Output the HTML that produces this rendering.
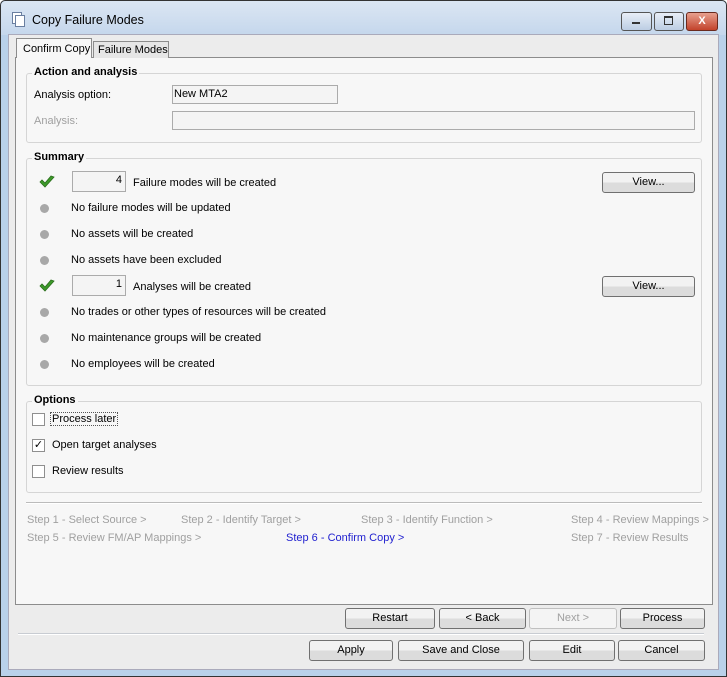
<!DOCTYPE html>
<html><head><style>
body{margin:0;width:727px;height:677px;overflow:hidden;font-family:"Liberation Sans",sans-serif;font-size:11px;color:#000;white-space:nowrap;}
.win{position:absolute;left:0;top:0;width:725px;height:675px;border:1px solid #333;background:#b9d1ea;border-radius:5px 5px 0 0;}
.title{position:absolute;left:0;top:0;width:725px;height:34px;background:linear-gradient(#dbe6f3,#c5d7ec);border-radius:5px 5px 0 0;}
.client{position:absolute;left:7px;top:33px;width:709px;height:634px;background:#ececec;border:1px solid #aab;}
.a{position:absolute;}
.tabpanel{position:absolute;left:6px;top:22px;width:696px;height:546px;border:1px solid #8c8c8c;background:#f7f7f7;}
.grp{position:absolute;border:1px solid #d5d5d5;border-radius:3px;}
.grp .lg{position:absolute;top:-8px;left:5px;background:#f7f7f7;padding:0 2px;font-weight:bold;}
.tb{position:absolute;border:1px solid #ababab;background:#f4f4f4;height:19px;box-sizing:border-box;}
.btn{position:absolute;height:21px;box-sizing:border-box;border:1px solid #707070;border-radius:3px;background:linear-gradient(#f2f2f2 50%,#dcdcdc 50%);text-align:center;line-height:19px;}
.dot{position:absolute;width:9px;height:9px;border-radius:50%;background:#a8a8a8;}
.cb{position:absolute;width:11px;height:11px;border:1px solid #8f8f8f;background:#fff;}
.step{position:absolute;color:#a0a0a0;}
</style></head><body>
<div class="win">
<div class="title"></div>
<svg class="a" style="left:11px;top:11px" width="14" height="16"><rect x="0.5" y="0.5" width="9" height="11" fill="#fff" stroke="#6a7fa0"/><rect x="3.5" y="3.5" width="9" height="11" fill="#fff" stroke="#6a7fa0"/></svg>
<div class="a" style="left:31px;top:12px;font-size:12.5px">Copy Failure Modes</div>
<div class="a" style="left:620px;top:11px;width:29px;height:17px;border:1px solid #555;border-radius:3px;background:linear-gradient(#e8eef7,#bccde3)"></div>
<div class="a" style="left:631px;top:21px;width:8px;height:2px;background:#333"></div>
<div class="a" style="left:653px;top:11px;width:28px;height:17px;border:1px solid #555;border-radius:3px;background:linear-gradient(#e8eef7,#bccde3)"></div>
<div class="a" style="left:663px;top:15px;width:7px;height:6px;border:1px solid #333;border-top-width:2px"></div>
<div class="a" style="left:685px;top:11px;width:30px;height:17px;border:1px solid #6a2a1e;border-radius:3px;background:linear-gradient(#e7a08f,#c3432b);color:#fff;font-weight:bold;text-align:center;line-height:17px">X</div>
<div class="client">
<div class="tabpanel">
<div class="grp" style="left:10px;top:15px;width:674px;height:68px"><span class="lg">Action and analysis</span>
<div class="a" style="left:7px;top:15px">Analysis option:</div>
<div class="tb" style="left:145px;top:11px;width:166px;padding:2px 1px">New MTA2</div>
<div class="a" style="left:7px;top:41px;color:#a0a0a0">Analysis:</div>
<div class="tb" style="left:145px;top:37px;width:523px"></div>
</div>
<div class="grp" style="left:10px;top:100px;width:674px;height:226px"><span class="lg">Summary</span>
<svg class="a" style="left:12px;top:16px" width="16" height="14"><path d="M1 7 L6 12 L15 2 L12 1 L6 8 L3 5 Z" fill="#3d9a2a" stroke="#2a6e1c" stroke-width="0.8"/></svg>
<div class="tb" style="left:45px;top:12px;width:54px;height:21px;text-align:right;padding:2px 3px">4</div>
<div class="a" style="left:106px;top:18px">Failure modes will be created</div>
<div class="btn" style="left:575px;top:13px;width:93px">View...</div>
<div class="dot" style="left:13px;top:45px"></div><div class="a" style="left:44px;top:43px">No failure modes will be updated</div>
<div class="dot" style="left:13px;top:71px"></div><div class="a" style="left:44px;top:69px">No assets will be created</div>
<div class="dot" style="left:13px;top:97px"></div><div class="a" style="left:44px;top:95px">No assets have been excluded</div>
<svg class="a" style="left:12px;top:120px" width="16" height="14"><path d="M1 7 L6 12 L15 2 L12 1 L6 8 L3 5 Z" fill="#3d9a2a" stroke="#2a6e1c" stroke-width="0.8"/></svg>
<div class="tb" style="left:45px;top:116px;width:54px;height:21px;text-align:right;padding:2px 3px">1</div>
<div class="a" style="left:106px;top:122px">Analyses will be created</div>
<div class="btn" style="left:575px;top:117px;width:93px">View...</div>
<div class="dot" style="left:13px;top:149px"></div><div class="a" style="left:44px;top:147px">No trades or other types of resources will be created</div>
<div class="dot" style="left:13px;top:175px"></div><div class="a" style="left:44px;top:173px">No maintenance groups will be created</div>
<div class="dot" style="left:13px;top:201px"></div><div class="a" style="left:44px;top:199px">No employees will be created</div>
</div>
<div class="grp" style="left:10px;top:343px;width:674px;height:90px"><span class="lg">Options</span>
<div class="cb" style="left:5px;top:11px"></div><div class="a" style="left:23px;top:10px;border:1px dotted #555;padding:0 1px">Process later</div>
<div class="cb" style="left:5px;top:37px;text-align:center;line-height:11px;font-size:11px">✓</div><div class="a" style="left:25px;top:37px">Open target analyses</div>
<div class="cb" style="left:5px;top:63px"></div><div class="a" style="left:25px;top:63px">Review results</div>
</div>
<div class="a" style="left:10px;top:444px;width:676px;border-top:1px solid #bbb;border-bottom:1px solid #fff"></div>
<div class="step" style="left:11px;top:456px">Step 1 - Select Source &gt;</div>
<div class="step" style="left:165px;top:456px">Step 2 - Identify Target &gt;</div>
<div class="step" style="left:345px;top:456px">Step 3 - Identify Function &gt;</div>
<div class="step" style="left:555px;top:456px">Step 4 - Review Mappings &gt;</div>
<div class="step" style="left:11px;top:474px">Step 5 - Review FM/AP Mappings &gt;</div>
<div class="step" style="left:270px;top:474px;color:#1f1fcf">Step 6 - Confirm Copy &gt;</div>
<div class="step" style="left:555px;top:474px">Step 7 - Review Results</div>
</div>
<div class="a" style="left:7px;top:3px;width:76px;height:20px;border:1px solid #8c8c8c;border-bottom:none;background:#f7f7f7;z-index:2;padding:4px 0 0 6px;box-sizing:border-box">Confirm Copy</div>
<div class="a" style="left:84px;top:6px;width:76px;height:17px;border:1px solid #8c8c8c;border-bottom:none;background:#e6e6e6;padding:2px 0 0 4px;box-sizing:border-box">Failure Modes</div>
<div class="btn" style="left:336px;top:573px;width:90px">Restart</div>
<div class="btn" style="left:430px;top:573px;width:87px">&lt; Back</div>
<div class="btn" style="left:520px;top:573px;width:88px;color:#a0a0a0;border-color:#c0c0c0;background:#f4f4f4">Next &gt;</div>
<div class="btn" style="left:611px;top:573px;width:85px">Process</div>
<div class="a" style="left:9px;top:598px;width:686px;border-top:1px solid #c8ccd2;border-bottom:1px solid #fff"></div>
<div class="btn" style="left:300px;top:605px;width:84px">Apply</div>
<div class="btn" style="left:389px;top:605px;width:126px">Save and Close</div>
<div class="btn" style="left:520px;top:605px;width:86px">Edit</div>
<div class="btn" style="left:609px;top:605px;width:87px">Cancel</div>
</div>
</div>
</body></html>
